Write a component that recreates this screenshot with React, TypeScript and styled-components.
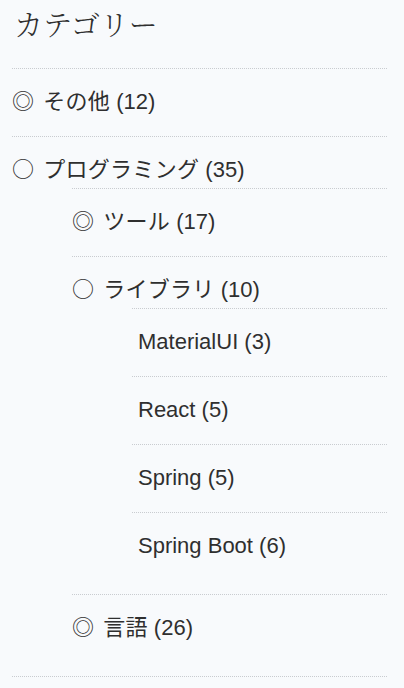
import React from "react";
import styled, { createGlobalStyle } from "styled-components";

type Category = { name: string; count: number; children?: Category[] };

const categories: Category[] = [
  { name: "その他", count: 12 },
  {
    name: "プログラミング",
    count: 35,
    children: [
      { name: "ツール", count: 17 },
      {
        name: "ライブラリ",
        count: 10,
        children: [
          { name: "MaterialUI", count: 3 },
          { name: "React", count: 5 },
          { name: "Spring", count: 5 },
          { name: "Spring Boot", count: 6 },
        ],
      },
      { name: "言語", count: 26 },
    ],
  },
];

const GlobalStyle = createGlobalStyle`
  html, body {
    margin: 0;
    padding: 0;
    background: #f8fafc;
  }
`;

const Widget = styled.section`
  padding: 4px 17px 0 12px;
  color: #2f2f2f;
`;

const Title = styled.h2`
  margin: 0 0 24px;
  padding-left: 2px;
  font-family: "Noto Serif CJK JP", "Liberation Serif", serif;
  font-size: 29px;
  font-weight: 300;
  line-height: 40px;
  color: #2f2f2f;
`;

const List = styled.ul<{ $nested?: boolean }>`
  list-style: none;
  margin: 0;
  padding: 0 0 0 ${(p) => (p.$nested ? 60 : 0)}px;
  border-bottom: ${(p) => (p.$nested ? "none" : "1px dotted #c9ccd0")};
`;

const Item = styled.li<{ $parent?: boolean }>`
  border-top: 1px dotted #c9ccd0;
  padding: 14px 0 ${(p) => (p.$parent ? 14 : 16)}px;
`;

const Label = styled.div<{ $plain?: boolean }>`
  font-family: "Liberation Sans", "Noto Sans CJK JP", sans-serif;
  font-size: 22px;
  line-height: 37px;
  color: #2f2f2f;
  padding-left: ${(p) => (p.$plain ? 6 : 0)}px;
  white-space: nowrap;
`;

const Marker = styled.span`
  font-family: "Noto Sans CJK JP", sans-serif;
  line-height: 1;
  margin-right: 3px;
`;

const Name = styled.span`
  letter-spacing: 0.3px;
`;

function CategoryList({ items, depth }: { items: Category[]; depth: number }) {
  return (
    <List $nested={depth > 0}>
      {items.map((c) => {
        const hasChildren = !!c.children && c.children.length > 0;
        const marker = hasChildren ? "○" : depth < 2 ? "◎" : "";
        return (
          <Item key={c.name} $parent={hasChildren}>
            <Label $plain={!marker}>
              {marker && <Marker>{marker}</Marker>}
              {marker ? " " : ""}
              {marker ? <Name>{c.name}</Name> : c.name} ({c.count})
            </Label>
            {hasChildren && <CategoryList items={c.children!} depth={depth + 1} />}
          </Item>
        );
      })}
    </List>
  );
}

export default function App() {
  return (
    <>
      <GlobalStyle />
      <Widget>
        <Title>カテゴリー</Title>
        <CategoryList items={categories} depth={0} />
      </Widget>
    </>
  );
}
